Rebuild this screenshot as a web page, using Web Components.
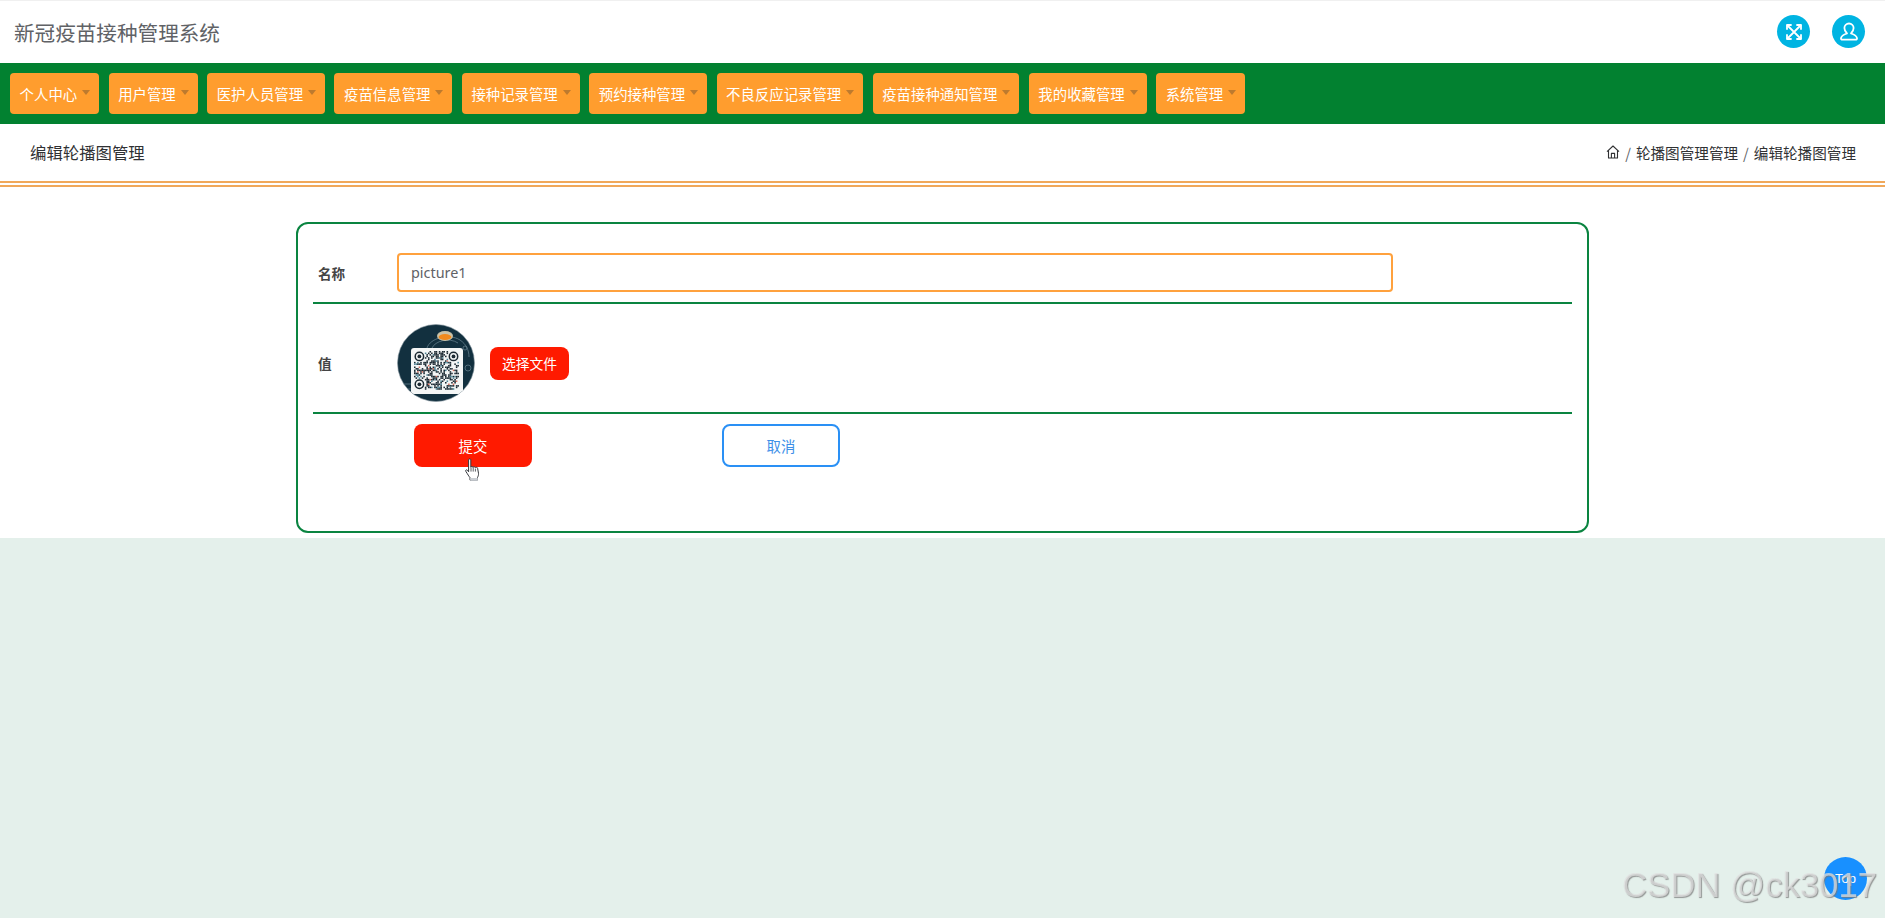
<!DOCTYPE html>
<html lang="zh">
<head>
<meta charset="utf-8">
<title>新冠疫苗接种管理系统</title>
<style>
  html, body { margin: 0; padding: 0; height: 100%; background: #e4f0eb; }
  body { font-family: "Noto Sans CJK SC", "Noto Sans", sans-serif; overflow: hidden; }
</style>
</head>
<body>
<vax-app>
  <top-bar title-text="新冠疫苗接种管理系统"></top-bar>
  <nav-menu>
    <nav-item>个人中心</nav-item>
    <nav-item>用户管理</nav-item>
    <nav-item>医护人员管理</nav-item>
    <nav-item>疫苗信息管理</nav-item>
    <nav-item>接种记录管理</nav-item>
    <nav-item>预约接种管理</nav-item>
    <nav-item>不良反应记录管理</nav-item>
    <nav-item>疫苗接种通知管理</nav-item>
    <nav-item>我的收藏管理</nav-item>
    <nav-item>系统管理</nav-item>
  </nav-menu>
  <page-head heading="编辑轮播图管理" parent="轮播图管理管理"></page-head>
  <edit-form></edit-form>
</vax-app>
<back-top></back-top>
<water-mark>CSDN @ck3017</water-mark>

<script>
(function() {

  const template_app = document.createElement('template');
  template_app.innerHTML = `
    <style>
      :host { display: block; background: #fff; border-top: 1px solid #f0f0f0; }
    </style>
    <slot></slot>
  `;

  class VaxApp extends HTMLElement {
    constructor() {
      super();
      this.attachShadow({ mode: 'open' });
      this.shadowRoot.appendChild(template_app.content.cloneNode(true));
    }
  }

  const template_top = document.createElement('template');
  template_top.innerHTML = `
    <style>
      :host { display: flex; align-items: center; height: 62px; padding: 0 20px 0 14px; box-sizing: border-box; }
      .title { flex: 1; font-size: 20.6px; color: #606266; margin-top: -1px; }
      .round {
        width: 33px; height: 33px; border-radius: 50%;
        background: #00b4e2; margin-left: 22px; margin-top: -1px;
        display: flex; align-items: center; justify-content: center;
      }
      svg { fill: none; stroke: #fff; stroke-width: 1.8; stroke-linecap: round; stroke-linejoin: round; }
    </style>
    <div class="title"></div>
    <div class="round">
      <svg width="20" height="20" viewBox="0 0 20 20">
        <path d="M3 7V3h4M13 3h4v4M17 13v4h-4M7 17H3v-4"/>
        <path d="M3.5 3.5l13 13M16.5 3.5l-13 13"/>
      </svg>
    </div>
    <div class="round">
      <svg width="22" height="22" viewBox="0 0 22 22">
        <path d="M11 2.5a4.6 4.6 0 0 1 4.6 4.6c0 2.4-1.3 4.2-2.6 5.4 2.9.9 5.6 2.5 6 4.6.2 1-.5 1.6-1.4 1.6H4.4c-.9 0-1.6-.6-1.4-1.6.4-2.1 3.1-3.7 6-4.6-1.3-1.2-2.6-3-2.6-5.4A4.6 4.6 0 0 1 11 2.5z"/>
      </svg>
    </div>
  `;

  class TopBar extends HTMLElement {
    constructor() {
      super();
      this.attachShadow({ mode: 'open' });
      this.shadowRoot.appendChild(template_top.content.cloneNode(true));
    }

    connectedCallback() {
      this.shadowRoot.querySelector('.title').textContent = this.getAttribute('title-text');
    }
  }

  const template_nav = document.createElement('template');
  template_nav.innerHTML = `
    <style>
      :host { display: flex; gap: 9.4px; height: 61px; box-sizing: border-box; padding: 10px; background: #028130; }
    </style>
    <slot></slot>
  `;

  class NavMenu extends HTMLElement {
    constructor() {
      super();
      this.attachShadow({ mode: 'open' });
      this.shadowRoot.appendChild(template_nav.content.cloneNode(true));
    }
  }

  const template_item = document.createElement('template');
  template_item.innerHTML = `
    <style>
      :host {
        display: flex; align-items: center; height: 41px; box-sizing: border-box;
        padding: 0 9px 0 9.6px; background: #ff9d2e; border-radius: 4px;
        color: #fff; font-size: 14.4px; white-space: nowrap;
      }
      .caret {
        width: 0; height: 0; margin-left: 5px; margin-top: -2px;
        border-left: 4.5px solid transparent; border-right: 4.5px solid transparent;
        border-top: 5px solid #bd7a2e;
      }
    </style>
    <slot></slot><span class="caret"></span>
  `;

  class NavItem extends HTMLElement {
    constructor() {
      super();
      this.attachShadow({ mode: 'open' });
      this.shadowRoot.appendChild(template_item.content.cloneNode(true));
    }
  }

  const template_head = document.createElement('template');
  template_head.innerHTML = `
    <style>
      :host {
        display: flex; align-items: center; height: 63px; box-sizing: border-box;
        padding: 0 29px 0 30px; border-bottom: 6px double #f0a85a; color: #303133;
      }
      .heading { flex: 1; font-size: 16.4px; margin-top: -1px; }
      .crumbs { display: flex; align-items: center; font-size: 14.6px; color: #303133; margin-top: -1px; }
      .sep { margin: 0 5px; color: #606266; }
      svg { fill: none; stroke: #303133; stroke-width: 1.1; stroke-linejoin: round; display: block; }
    </style>
    <div class="heading"></div>
    <div class="crumbs">
      <svg width="14" height="14" viewBox="0 0 14 14">
        <path d="M1 6.6 7 1l6 5.6M2.5 5.4V13h9V5.4"/>
        <path d="M5.4 13V8.4h3.2V13"/>
      </svg>
      <span class="sep">/</span><span class="parent"></span>
      <span class="sep">/</span><span class="current"></span>
    </div>
  `;

  class PageHead extends HTMLElement {
    constructor() {
      super();
      this.attachShadow({ mode: 'open' });
      this.shadowRoot.appendChild(template_head.content.cloneNode(true));
    }

    connectedCallback() {
      const heading = this.getAttribute('heading');
      this.shadowRoot.querySelector('.heading').textContent = heading;
      this.shadowRoot.querySelector('.current').textContent = heading;
      this.shadowRoot.querySelector('.parent').textContent = this.getAttribute('parent');
    }
  }

  const template_form = document.createElement('template');
  template_form.innerHTML = `
    <style>
      :host { display: block; padding: 35px 0 5px; }
      .card {
        width: 1293px; height: 311px; box-sizing: border-box; margin: 0 auto;
        border: 2px solid #0a8440; border-radius: 12px; padding: 0 15px;
      }
      .row { display: flex; align-items: center; border-bottom: 2px solid #0a8440; }
      .first { padding: 29px 0 10px; }
      .second { padding: 20px 0 10px; }
      label { width: 84px; padding-left: 5px; box-sizing: border-box; font-size: 13.6px; font-weight: 700; color: #444; }
      .name {
        width: 996px; height: 39px; box-sizing: border-box;
        border: 2px solid #ffa13d; border-radius: 4px; padding: 0 12px;
        font: 14.4px "Noto Sans", "Noto Sans CJK SC", sans-serif; color: #606266; outline: none;
      }
      .file {
        margin-left: 15px; width: 79px; height: 33px; border-radius: 8px;
        background: #ff1a00; color: #fff; font-size: 13.8px;
        display: flex; align-items: center; justify-content: center;
      }
      .actions { display: flex; padding: 10px 0 0 84px; }
      .btn {
        width: 118px; height: 43px; box-sizing: border-box; border-radius: 8px; font-size: 14.4px;
        display: flex; align-items: center; justify-content: center; position: relative;
      }
      .submit { margin-left: 17px; background: #ff1a00; color: #fff; }
      .cancel { margin-left: 190px; border: 2px solid #2a90f5; color: #3d8fe8; background: #fff; }
      hand-cursor { position: absolute; left: 50px; top: 34px; }
    </style>
    <div class="card">
      <div class="row first">
        <label>名称</label>
        <input class="name" value="picture1">
      </div>
      <div class="row second">
        <label>值</label>
        <qr-avatar></qr-avatar>
        <div class="file">选择文件</div>
      </div>
      <div class="actions">
        <div class="btn submit">提交<hand-cursor></hand-cursor></div>
        <div class="btn cancel">取消</div>
      </div>
    </div>
  `;

  class EditForm extends HTMLElement {
    constructor() {
      super();
      this.attachShadow({ mode: 'open' });
      this.shadowRoot.appendChild(template_form.content.cloneNode(true));
    }
  }

  class QrAvatar extends HTMLElement {
    constructor() {
      super();
      this.attachShadow({ mode: 'open' });
      this.shadowRoot.innerHTML = `
        <style>
          :host { display: block; width: 78px; height: 78px; }
          svg { display: block; }
        </style>
        <svg width="78" height="78" viewBox="0 0 78 78">
          <defs><clipPath id="c"><circle cx="39" cy="39" r="38.5"/></clipPath></defs>
          <circle cx="39" cy="39" r="38.5" fill="#12303f" stroke="#8a99a1" stroke-width=".6"/>
          <g clip-path="url(#c)">
            <g fill="none" stroke="#6d8895" stroke-width=".7">
              <path d="M30 24c3-10 22-15 33-8 6 4 9 10 9 17"/>
              <path d="M35 24c3-7 17-11 26-5"/>
              <circle cx="68" cy="24" r="2"/>
              <circle cx="71" cy="44" r="3"/>
              <path d="M8 65h12M5 60h9"/>
            </g>
            <ellipse cx="48" cy="12" rx="8" ry="5" fill="#c9c2a8"/>
            <ellipse cx="48" cy="13" rx="6.4" ry="3" fill="#f08a1e"/>
            <rect x="14" y="24" width="52" height="46" rx="3" fill="#f4f6f6"/>
            ${this._modules()}
          </g>
        </svg>
      `;
    }

    // fake qr code, seeded so every run draws the same one
    _modules() {
      let seed = 17;
      let out = '';
      const size = 1.55, cols = 29, rows = 25, x0 = 17, y0 = 27;
      const inFinder = (c, r) =>
        (c < 7 && r < 7) || (c > cols - 8 && r < 7) || (c < 7 && r > rows - 8);
      for (let r = 0; r < rows; r++) {
        for (let c = 0; c < cols; c++) {
          seed = (seed * 1103515245 + 12345) & 0x7fffffff;
          if (inFinder(c, r) || (seed >> 16) % 100 > 50) continue;
          const dot = (seed >> 8) % 40 === 0 ? '#d9705f' : (seed >> 8) % 9 === 0 ? '#4d8496' : '#1c2a33';
          out += `<rect x="${(x0 + c * size).toFixed(2)}" y="${(y0 + r * size).toFixed(2)}" width="${size}" height="${size}" fill="${dot}"/>`;
        }
      }
      const finder = (c, r) => {
        const x = x0 + c * size + 5.4, y = y0 + r * size + 5.4;
        return `<circle cx="${x}" cy="${y}" r="4.2" fill="none" stroke="#1c2a33" stroke-width="1.5"/><circle cx="${x}" cy="${y}" r="1.9" fill="#1c2a33"/>`;
      };
      return out + finder(0, 0) + finder(cols - 7, 0) + finder(0, rows - 7);
    }
  }

  class HandCursor extends HTMLElement {
    constructor() {
      super();
      this.attachShadow({ mode: 'open' });
      this.shadowRoot.innerHTML = `
        <style>
          :host { display: block; width: 17px; height: 25px; }
          svg { display: block; }
        </style>
        <svg width="17" height="25" viewBox="0 0 17 25">
          <path d="M4.6 1.8c0-1.2 2.2-1.2 2.2 0v7.4c.2-1 2.2-1 2.3.2.2-1 2.2-.9 2.3.4.3-.9 2.1-.7 2.2.5l.9 5c.2 1.6-.3 2.8-1 4.2v2.6H6v-2.4c-1.1-1.4-2.3-3.4-4.2-6.4-.7-1.2.8-2 1.6-1.1l1.2 1.6z" fill="#fff" stroke="#33363b" stroke-width="1" stroke-linejoin="round"/>
          <path d="M7 9.4v4.2M9.2 9.6v4M11.4 10.6v3" fill="none" stroke="#33363b" stroke-width=".8"/>
          <path d="M6.2 20h7.6v2.8H6.2z" fill="#c9cdd2"/>
        </svg>
      `;
    }
  }

  class BackTop extends HTMLElement {
    constructor() {
      super();
      this.attachShadow({ mode: 'open' });
      this.shadowRoot.innerHTML = `
        <style>
          :host {
            position: fixed; left: 1824px; top: 857px; width: 43px; height: 43px; border-radius: 50%;
            background: #1890ff; color: #fff; font: 13px "Liberation Sans", sans-serif;
            display: flex; align-items: center; justify-content: center;
          }
        </style>
        Top
      `;
    }
  }

  class WaterMark extends HTMLElement {
    constructor() {
      super();
      this.attachShadow({ mode: 'open' });
      this.shadowRoot.innerHTML = `
        <style>
          :host {
            position: fixed; left: 1622px; top: 865px; white-space: nowrap;
            font: 34.7px/40px "Liberation Sans", sans-serif;
            color: rgba(226, 226, 226, .72);
            text-shadow: 1px 1px 1px rgba(120, 120, 120, .75);
          }
        </style>
        <slot></slot>
      `;
    }
  }

  window.customElements.define('vax-app', VaxApp);
  window.customElements.define('top-bar', TopBar);
  window.customElements.define('nav-menu', NavMenu);
  window.customElements.define('nav-item', NavItem);
  window.customElements.define('page-head', PageHead);
  window.customElements.define('edit-form', EditForm);
  window.customElements.define('qr-avatar', QrAvatar);
  window.customElements.define('hand-cursor', HandCursor);
  window.customElements.define('back-top', BackTop);
  window.customElements.define('water-mark', WaterMark);
})();
</script>
</body>
</html>
